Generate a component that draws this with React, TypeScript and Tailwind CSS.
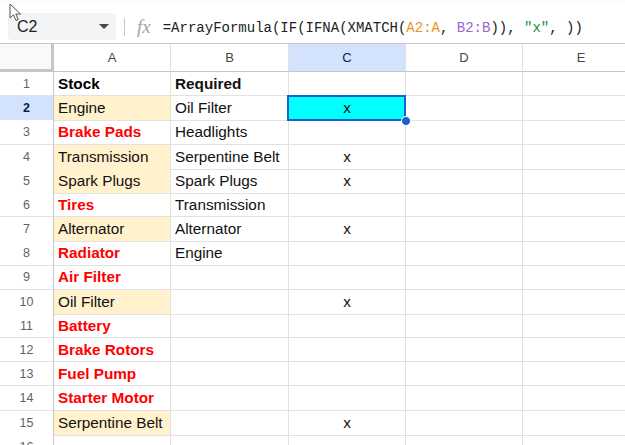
import React from "react";

type Cell = { t: string; k?: "bold" | "red" | "yellow" | "plain" };

const A: Cell[] = [
  { t: "Stock", k: "bold" },
  { t: "Engine", k: "yellow" },
  { t: "Brake Pads", k: "red" },
  { t: "Transmission", k: "yellow" },
  { t: "Spark Plugs", k: "yellow" },
  { t: "Tires", k: "red" },
  { t: "Alternator", k: "yellow" },
  { t: "Radiator", k: "red" },
  { t: "Air Filter", k: "red" },
  { t: "Oil Filter", k: "yellow" },
  { t: "Battery", k: "red" },
  { t: "Brake Rotors", k: "red" },
  { t: "Fuel Pump", k: "red" },
  { t: "Starter Motor", k: "red" },
  { t: "Serpentine Belt", k: "yellow" },
  { t: "", k: "plain" },
];

const B: string[] = [
  "Required",
  "Oil Filter",
  "Headlights",
  "Serpentine Belt",
  "Spark Plugs",
  "Transmission",
  "Alternator",
  "Engine",
  "", "", "", "", "", "", "", "",
];

const C: string[] = ["", "x", "", "x", "x", "", "x", "", "", "x", "", "", "", "", "x", ""];

const grid = "grid grid-cols-[54px_117px_118px_117px_117px_117px]";

function aClass(k?: string) {
  switch (k) {
    case "bold":
      return "font-bold text-[#000]";
    case "red":
      return "font-bold text-[#ff0000]";
    case "yellow":
      return "bg-[#fff2cc] text-[#111]";
    default:
      return "text-[#111]";
  }
}

export default function App() {
  return (
    <div
      className="relative w-[625px] h-[445px] overflow-hidden bg-white"
      style={{ fontFamily: '"Liberation Sans", Arial, sans-serif' }}
    >
      {/* toolbar */}
      <div className="h-[44px] border-b border-[#c4c7c5] bg-white">
        <div className="h-[4px] bg-[#f9fbfd]" />
        <div className="flex items-start pt-[9px]">
          <div className="ml-[8px] w-[108px] h-[27px] rounded-[4px] bg-[#f1f3f4] flex items-center pl-[9px] pr-[6px]">
            <span className="text-[16px] text-[#202124] leading-none">C2</span>
            <span className="ml-auto mr-[1px]">
              <svg width="10" height="5" viewBox="0 0 10 5">
                <path d="M0 0 L10 0 L5 5 Z" fill="#444746" />
              </svg>
            </span>
          </div>
          <div className="ml-[8px] mt-[5px] w-px h-[18px] bg-[#c4c7c5]" />
          <div
            className="ml-[12px] mt-[2px] text-[19px] italic text-[#a0a4a8] leading-[24px]"
            style={{ fontFamily: '"Liberation Serif", "Times New Roman", serif' }}
          >
            fx
          </div>
          <div
            className="ml-[12px] mt-[6px] text-[14px] leading-[18px] whitespace-nowrap text-[#202124]"
            style={{ fontFamily: '"Liberation Mono", "DejaVu Sans Mono", monospace' }}
          >
            =ArrayFormula(IF(IFNA(XMATCH(<span className="text-[#e8951e]">A2:A</span>,{" "}
            <span className="text-[#9c64cc]">B2:B</span>)), <span className="text-[#1e8e3e]">"x"</span>, ))
          </div>
        </div>
      </div>

      {/* column header */}
      <div className={`${grid} h-[28px]`}>
        <div className="bg-[#f8f9fa] border-r-[3px] border-b-[3px] border-[#c4c7c5]" />
        {["A", "B", "C", "D", "E"].map((c) => (
          <div
            key={c}
            className={`flex items-center justify-center pt-[1px] border-r border-b border-[#c4c7c5] text-[13px] ${
              c === "C" ? "bg-[#d3e3fd] text-[#0b1e45]" : "bg-white text-[#444746]"
            }`}
            style={{ borderRightColor: "#e1e1e1" }}
          >
            {c}
          </div>
        ))}
      </div>

      {/* rows */}
      {A.map((a, i) => {
        const n = i + 1;
        const sel = n === 2;
        return (
          <div key={n} className={`${grid} h-[24.2px]`}>
            <div
              className={`flex items-center justify-center pt-[1px] border-r border-b border-[#c7c7c7] text-[12.5px] ${
                sel ? "bg-[#d3e3fd] font-bold text-[#0b1e45]" : "bg-white text-[#5f6368]"
              }`}
              style={{ borderBottomColor: "#e1e1e1" }}
            >
              {n}
            </div>
            <div
              className={`flex items-center pl-[4px] pt-[1px] border-r border-b border-[#e1e1e1] text-[15.3px] whitespace-nowrap overflow-hidden ${aClass(
                a.k
              )}`}
            >
              {a.t}
            </div>
            <div
              className={`flex items-center pl-[4px] pt-[1px] border-r border-b border-[#e1e1e1] text-[15.3px] whitespace-nowrap overflow-hidden text-[#111] ${
                n === 1 ? "font-bold text-[#000]" : ""
              }`}
            >
              {B[i]}
            </div>
            <div
              className={`relative flex items-center justify-center pt-[1px] border-r border-b border-[#e1e1e1] text-[15.3px] text-[#111] ${
                sel ? "bg-[#00ffff]" : ""
              }`}
            >
              {C[i]}
              {sel && (
                <>
                  <div className="absolute left-[-2px] top-[-1px] right-[-1px] bottom-[-1px] border-2 border-[#1a5fd0]" />
                  <div className="absolute right-[-6px] bottom-[-6px] w-[10px] h-[10px] rounded-full bg-[#1a5fd0] border border-white z-10" />
                </>
              )}
            </div>
            <div className="border-r border-b border-[#e1e1e1]" />
            <div className="border-r border-b border-[#e1e1e1]" />
          </div>
        );
      })}

      {/* mouse cursor */}
      <svg className="absolute left-[9px] top-[3px]" width="13" height="19" viewBox="0 0 13 19">
        <path
          d="M1 1 L1 15 L4.5 11.8 L7 17.5 L9.2 16.5 L6.8 11 L11.5 11 Z"
          fill="#ffffff"
          stroke="#555"
          strokeWidth="1"
          strokeLinejoin="round"
        />
      </svg>
    </div>
  );
}
